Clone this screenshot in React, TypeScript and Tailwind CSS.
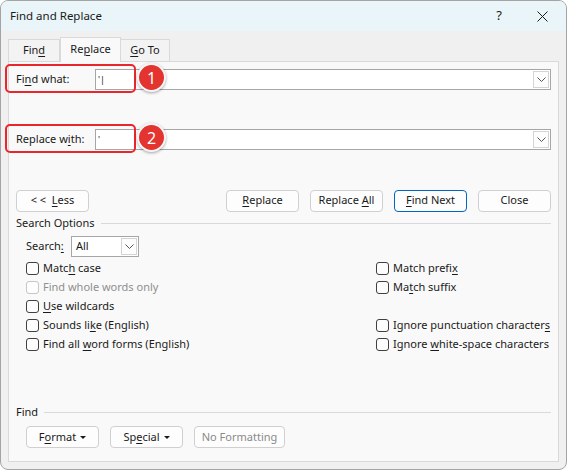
import type { ReactNode } from 'react'

const font = { fontFamily: '"Noto Sans", "Segoe UI", sans-serif' }

function U({ children }: { children: ReactNode }) {
  return <span className="underline underline-offset-2">{children}</span>
}

function Chevron() {
  return (
    <svg width="9" height="5" viewBox="0 0 9 5" fill="none" stroke="#555" strokeWidth="1">
      <path d="M0.5 0.5 L4.5 4.5 L8.5 0.5" />
    </svg>
  )
}

function Caret() {
  return (
    <svg width="6" height="3" viewBox="0 0 6 3" className="ml-[4px]">
      <path d="M0 0 H6 L3 3 Z" fill="#1a1a1a" />
    </svg>
  )
}

function Btn({ children, w, primary, disabled }: { children: ReactNode; w: string; primary?: boolean; disabled?: boolean }) {
  return (
    <div
      className={`flex h-[22px] shrink-0 items-center justify-center rounded-[4px] border bg-[#fdfdfd] ${w} ${
        primary ? 'border-[#0067c0]' : 'border-[#d0d0d0]'
      } ${disabled ? 'text-[#8a8a8a]' : 'text-[#1a1a1a]'}`}
    >
      <span className="flex items-center whitespace-pre">{children}</span>
    </div>
  )
}

function Check({ children, disabled }: { children: ReactNode; disabled?: boolean }) {
  return (
    <div className={`flex h-[19px] items-center whitespace-nowrap ${disabled ? 'text-[#8f8f8f]' : 'text-[#1a1a1a]'}`}>
      <div
        className={`mr-[4px] h-[13px] w-[13px] shrink-0 rounded-[3px] border bg-[#fdfdfd] ${
          disabled ? 'border-[#c6c6c6]' : 'border-[#404040]'
        }`}
      />
      <span>{children}</span>
    </div>
  )
}

function ComboInput({ value }: { value: string }) {
  return (
    <div className="flex h-[21px] flex-1 items-stretch border border-[#a6a6a6] bg-white">
      <div className="flex flex-1 items-center pl-[2px] text-[9px] leading-none">{value}</div>
      <div className="my-[1px] mr-[1px] flex w-[16px] items-center justify-center border border-[#d4d4d4] bg-[#fdfdfd]">
        <Chevron />
      </div>
    </div>
  )
}

function Badge({ n, top }: { n: string; top: string }) {
  return (
    <>
      <div className={`absolute left-[-4px] h-[29px] w-[131px] rounded-[5px] border-2 border-[#e8262b] ${top}`} />
      <div
        className={`absolute left-[128px] flex h-[29px] w-[29px] items-center justify-center rounded-full border-2 border-[#f6f6f6] bg-[#e3342f] text-[16px] text-white shadow-[0_1px_3px_rgba(0,0,0,0.35)] ${top}`}
        style={{ marginTop: '-1px' }}
      >
        {n}
      </div>
    </>
  )
}

export default function App() {
  return (
    <div className="h-[471px] w-[568px] bg-white text-[11px] text-[#1a1a1a]" style={font}>
      <div className="flex h-[470px] w-[567px] flex-col overflow-hidden rounded-[8px] border border-[#a4a4a4] bg-[#f0f0f0]">
        {/* title bar */}
        <div className="flex h-[30px] items-center bg-[#e9f5f8] pl-[9px]">
          <span className="text-[11.5px]">Find and Replace</span>
          <span className="ml-auto mr-[35px] text-[13px]">?</span>
          <svg width="11" height="11" viewBox="0 0 11 11" className="mr-[18px]" stroke="#1a1a1a" strokeWidth="1">
            <path d="M0.5 0.5 L10.5 10.5 M10.5 0.5 L0.5 10.5" />
          </svg>
        </div>

        {/* tabs */}
        <div className="flex h-[30px] items-end pl-[7px]">
          <div className="flex h-[22px] w-[52px] items-center justify-center border border-b-0 border-[#d9d9d9] bg-[#f3f3f3]">
            <span>
              Fin<U>d</U>
            </span>
          </div>
          <div className="relative z-10 mb-[-1px] flex h-[25px] w-[61px] items-center justify-center border border-b-0 border-[#d9d9d9] bg-[#f9f9f9] pb-[2px]">
            <span>
              Re<U>p</U>lace
            </span>
          </div>
          <div className="flex h-[22px] w-[49px] items-center justify-center border border-b-0 border-l-0 border-[#d9d9d9] bg-[#f3f3f3]">
            <span>
              <U>G</U>o To
            </span>
          </div>
        </div>

        {/* panel */}
        <div className="relative mx-[7px] mb-[7px] flex flex-1 flex-col border border-[#d9d9d9] bg-[#f9f9f9] px-[7px]">
          <div className="mt-[7px] flex items-center">
            <span className="w-[79px]">
              Fi<U>n</U>d what:
            </span>
            <ComboInput value="'|" />
          </div>
          <div className="mt-[39px] flex items-center">
            <span className="w-[79px]">
              Replace w<U>i</U>th:
            </span>
            <ComboInput value="'" />
          </div>

          <div className="mt-[39px] flex h-[23px] items-center">
            <Btn w="w-[73px]">
              {'< <  '}
              <U>L</U>ess
            </Btn>
            <div className="ml-auto flex gap-[11px]">
              <Btn w="w-[73px]">
                <U>R</U>eplace
              </Btn>
              <Btn w="w-[73px]">
                {'Replace '}
                <U>A</U>ll
              </Btn>
              <Btn w="w-[73px]" primary>
                <U>F</U>ind Next
              </Btn>
              <Btn w="w-[73px]">Close</Btn>
            </div>
          </div>

          <div className="mt-[3px] flex h-[16px] items-center">
            <span>Search Options</span>
            <div className="ml-[6px] h-px flex-1 bg-[#d9d9d9]" />
          </div>

          <div className="ml-[10px] mt-[5px] flex h-[21px] items-center">
            <span className="w-[45px]">
              Search<U>:</U>
            </span>
            <div className="flex h-[21px] w-[68px] items-stretch border border-[#a6a6a6] bg-white">
              <span className="flex flex-1 items-center pl-[4px]">All</span>
              <div className="my-[1px] mr-[1px] flex w-[16px] items-center justify-center border border-[#d4d4d4] bg-[#fdfdfd]">
                <Chevron />
              </div>
            </div>
          </div>

          <div className="ml-[10px] mt-[2px] flex">
            <div className="flex w-[350px] shrink-0 flex-col">
              <Check>
                Matc<U>h</U> case
              </Check>
              <Check disabled>Find whole words only</Check>
              <Check>
                <U>U</U>se wildcards
              </Check>
              <Check>
                Sounds li<U>k</U>e (English)
              </Check>
              <Check>
                Find all <U>w</U>ord forms (English)
              </Check>
            </div>
            <div className="flex flex-col">
              <Check>
                Match prefi<U>x</U>
              </Check>
              <Check>
                Ma<U>t</U>ch suffix
              </Check>
              <div className="h-[19px]" />
              <Check>
                Ignore punctuation character<U>s</U>
              </Check>
              <Check>
                Ignore <U>w</U>hite-space characters
              </Check>
            </div>
          </div>

          <div className="mt-auto flex h-[16px] items-center">
            <span>Find</span>
            <div className="ml-[6px] h-px flex-1 bg-[#d9d9d9]" />
          </div>
          <div className="mb-[13px] ml-[10px] mt-[6px] flex gap-[11px]">
            <Btn w="w-[73px]">
              F<U>o</U>rmat
              <Caret />
            </Btn>
            <Btn w="w-[73px]">
              Sp<U>e</U>cial
              <Caret />
            </Btn>
            <Btn w="w-[91px]" disabled>
              No Formatting
            </Btn>
          </div>

          <Badge n="1" top="top-[2px]" />
          <Badge n="2" top="top-[62px]" />
        </div>
      </div>
    </div>
  )
}
